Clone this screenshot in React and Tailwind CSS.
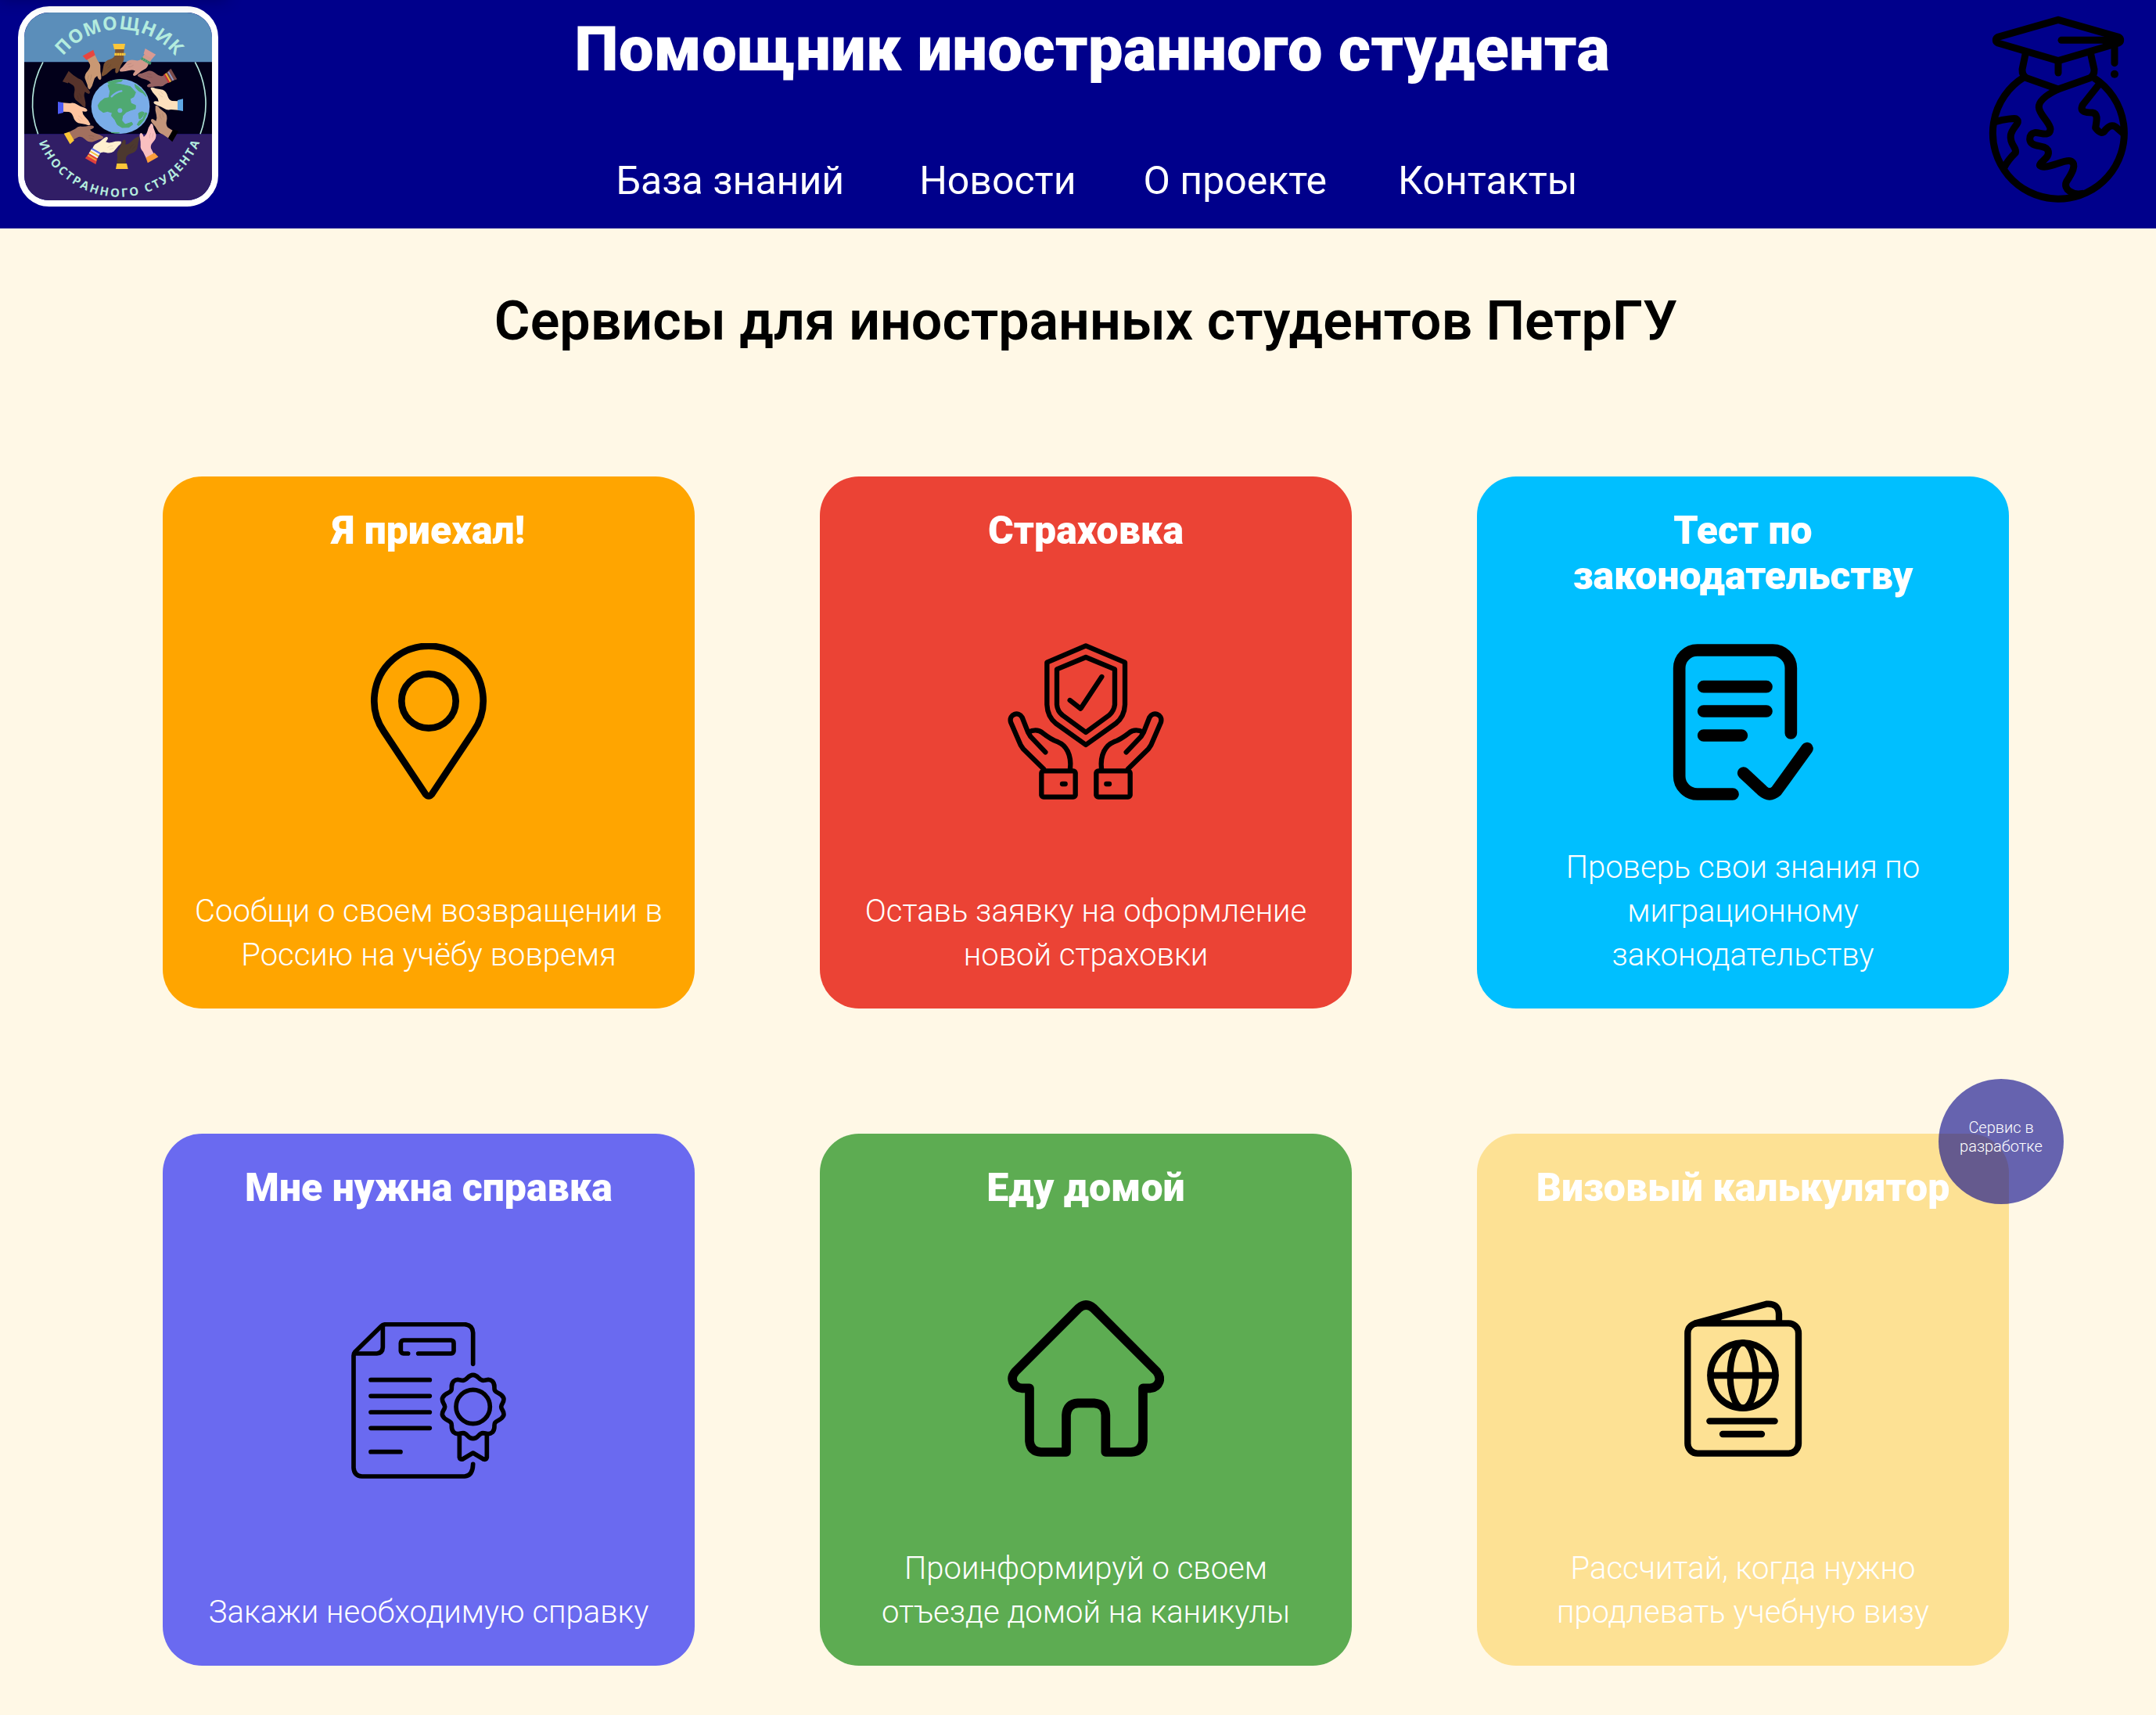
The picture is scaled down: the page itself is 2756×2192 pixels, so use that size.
import React from "react";

const CENTER = { x: 462, y: 408 };

const HANDS = [
  { angle: 0, skin: "#7a5233", cuff: "#fcc638", beads: "#fcc638" },
  { angle: 30, skin: "#d39a8c", cuff: "#d99a93", beads: "#3f9d6e" },
  { angle: 60, skin: "#956161", cuff: "#7c4b4a", bands: ["#8f9bc9", "#7c4b4a", "#f0b429", "#c8323c"] },
  { angle: 90, skin: "#fde0bd", cuff: "#5fa8e6" },
  { angle: 120, skin: "#c3957b", cuff: "#000000" },
  { angle: 150, skin: "#f9bfc0", cuff: "#fd9f3c" },
  { angle: 180, skin: "#4c382f", cuff: "#fcc638" },
  { angle: 210, skin: "#fff0cf", cuff: "#e0403c", bands: ["#f4a63a", "#e0403c", "#f6f0ea", "#f4c23a", "#f6f0ea", "#5b6be8"] },
  { angle: 240, skin: "#a2705f", cuff: "#fcc638" },
  { angle: 270, skin: "#ffc4a0", cuff: "#4d5cf5" },
  { angle: 300, skin: "#57332b", cuff: "#57332b" },
  { angle: 330, skin: "#c99873", cuff: "#e8453f" },
];

function Hand({ angle, skin, cuff, beads, bands = [] }) {
  return (
    <g transform={`rotate(${angle} ${CENTER.x} ${CENTER.y})`}>
      <path
        d="M442 186 L476 186 L474 214 Q478 230 470 240 Q462 252 458 266 Q452 284 444 280 Q440 276 443 262 Q432 262 422 272 Q408 287 393 293 Q386 288 393 274 L398 246 Q404 232 422 227 Q438 222 441 210 Z"
        fill={skin}
      />
      <path d="M412 262 Q422 258 426 246 M404 256 L416 244" stroke="#000" strokeOpacity="0.12" strokeWidth="2" fill="none" />
      <path d="M433 168 L480 168 L476 189 L438 189 Z" fill={cuff} />
      {beads && <path d="M439 208 H481" stroke={beads} strokeWidth="10" strokeDasharray="8 1" fill="none" />}
      {bands.map((c, i) => (
        <rect key={i} x="439" y={180 + i * 6} width="38" height="6" fill={c} />
      ))}
    </g>
  );
}

function Logo() {
  return (
    <svg viewBox="93 48 720 720" className="block size-full overflow-visible">
      <defs>
        <path id="logo-top" d="M 180 390 A 277 277 0 0 1 734 390" />
        <path id="logo-bottom" d="M 125 423 A 332 332 0 0 0 789 423" />
        <clipPath id="logo-clip">
          <rect x="93" y="48" width="720" height="720" rx="96" />
        </clipPath>
      </defs>
      <g clipPath="url(#logo-clip)">
        <rect x="93" y="48" width="720" height="191" fill="#5b8eba" />
        <rect x="93" y="238" width="720" height="276" fill="#02001a" />
        <rect x="93" y="514" width="720" height="254" fill="#311e66" />
      </g>
      <g fill="none" stroke="#b3e6dc" strokeWidth="5">
        <path d="M165 238 A332 332 0 0 0 146 514" />
        <path d="M748 238 A332 332 0 0 1 768 514" />
      </g>
      <ellipse cx="462" cy="408" rx="112" ry="105" fill="#7aade8" />
      <g fill="#4fa972" stroke="#4fa972" strokeWidth="3" strokeLinejoin="round">
        <path d="M414 326 L432 319 L462 323 L500 332 L520 354 L513 371 L499 379 L502 396 L520 404 L519 417 L500 423 L484 430 L470 444 L467 462 L480 477 L505 469 L509 477 L494 488 L468 489 L450 478 L441 460 L428 444 L430 432 L412 427 L396 431 L380 419 L376 404 L384 391 L400 378 L418 374 L422 350 Z" />
        <path d="M412 316 Q436 305 470 305 L466 312 L440 317 L418 321 Z" />
        <path d="M517 323 Q550 344 561 370 L548 357 L532 349 L520 336 Z" />
        <path d="M531 435 Q544 424 553 432 Q546 454 534 456 Z" />
        <path d="M557 432 L564 434 Q554 464 532 482 L526 478 L534 464 L548 456 Z" />
        <path d="M427 508 L458 509 Q440 512 427 508 Z" />
      </g>
      <circle cx="460" cy="424" r="9" fill="#7aade8" />
      <path d="M428 370 Q446 352 466 349" stroke="#7aade8" strokeWidth="7" strokeLinecap="round" fill="none" />
      {HANDS.map((h) => (
        <Hand key={h.angle} {...h} />
      ))}
      <text fill="#b4ecde" fontFamily="'Open Sans', sans-serif" fontWeight="700" fontSize="71" textAnchor="middle">
        <textPath href="#logo-top" startOffset="50%" textLength="492">ПОМОЩНИК</textPath>
      </text>
      <text fill="#b4ecde" fontFamily="'Open Sans', sans-serif" fontWeight="700" fontSize="45" textAnchor="middle">
        <textPath href="#logo-bottom" startOffset="50%" textLength="790">ИНОСТРАННОГО СТУДЕНТА</textPath>
      </text>
    </svg>
  );
}

function GraduateGlobe() {
  return (
    <svg viewBox="36 60 717 720" className="block h-[240px] w-[239px]" fill="none" stroke="#000" strokeWidth="27" strokeLinecap="round" strokeLinejoin="round">
      <path d="M262 296 A252 252 0 1 0 531 299" />
      <path d="M393 76 L162 142 Q154 146 154 154 Q154 162 162 165 L393 233 L624 165 Q632 162 632 154 Q632 146 624 142 Z" />
      <path d="M405 154 H620" />
      <path d="M560 150 L620 140 L624 164 L570 172 Z" fill="#000" strokeWidth="8" />
      <path d="M609 170 V242" />
      <circle cx="609" cy="284" r="15" fill="#000" stroke="none" />
      <path d="M393 240 V279" />
      <path d="M267 208 L255 266 Q254 290 272 299 L393 342 L514 299 Q532 290 531 266 L518 208" />
      <path d="M393 342 Q318 378 319 411 C320 440 362 470 363 495 C361 528 322 506 303 509 Q284 512 284 534 C286 568 340 552 353 575 C366 604 322 620 322 634 C344 654 410 612 438 617 C470 626 442 670 425 696 C410 726 450 750 486 742" />
      <path d="M549 324 L487 402 C474 430 500 432 524 432 C548 436 540 464 536 490 Q560 522 574 498 Q600 468 622 494 L641 510" />
      <path d="M154 466 C190 456 222 454 230 455 C254 470 218 484 211 518 C206 556 236 566 229 586 Q200 614 186 642" />
    </svg>
  );
}

function PinIcon() {
  return (
    <svg viewBox="24 66 600 600" className="block size-[200px]" fill="none" stroke="#000" strokeWidth="26" strokeLinejoin="round">
      <path d="M311 644 L152 405 A209 209 0 1 1 496 405 L337 644 Q324 660 311 644 Z" />
      <circle cx="324" cy="288" r="104" />
    </svg>
  );
}

function InsuranceIcon() {
  const hand = (
    <>
      <rect x="184" y="556" width="130" height="100" rx="8" />
      <path d="M264 606 H275" />
      <path d="M192 548 L114 472 L104 457 L66 369 C58 338 97 326 110 351 L132 407 L142 424 L199 484" />
      <path d="M134 408 C150 398 172 396 188 410 C206 424 222 436 247 445 C278 457 300 494 294 548" />
    </>
  );
  return (
    <svg viewBox="54 66 600 600" className="block size-[200px]" fill="none" stroke="#000" strokeWidth="19" strokeLinecap="round" strokeLinejoin="round">
      <path d="M354 76 L504 140 V302 Q502 348 469 374 L354 456 L239 374 Q207 348 205 302 V140 Z" />
      <path d="M354 120 L465 166 V302 Q462 326 444 342 L354 408 L264 342 Q245 326 243 302 V166 Z" />
      <path d="M293 285 L334 317 L415 195" />
      {hand}
      <g transform="translate(708 0) scale(-1 1)">{hand}</g>
    </svg>
  );
}

function TestIcon() {
  return (
    <svg viewBox="54 69 600 600" className="block size-[200px]" fill="none" stroke="#000" strokeWidth="47" strokeLinecap="round" strokeLinejoin="round">
      <path d="M538 411 V162 A69 69 0 0 0 469 93 H179 A69 69 0 0 0 110 162 V576 A69 69 0 0 0 179 645 H315" />
      <path d="M203 233 H444 M203 327 H444 M203 420 H349" />
      <path d="M356 564 L430 633 Q456 656 482 633 L600 470" />
    </svg>
  );
}

function CertificateIcon() {
  return (
    <svg viewBox="54 60 600 600" className="block size-[200px]" fill="none" stroke="#000" strokeWidth="17" strokeLinecap="round" strokeLinejoin="round">
      <path d="M524 220 V100 Q522 70 492 68 H188 Q178 69 172 75 L72 173 Q66 180 66 188 V618 Q68 649 98 651 H492 Q523 648 524 604" />
      <path d="M178 74 V156 Q177 178 155 180 H72" />
      <path d="M275 180 H258 Q248 179 247 170 V140 Q248 130 258 129 H440 Q450 130 450 140 V170 Q449 179 440 180 H314" />
      <path d="M132 281 H358 M132 343 H358 M132 405 H358 M132 466 H358 M132 557 H246" />
      <circle cx="524" cy="384" r="65" />
      <path d="M524 262 C545 262 544 282 562 283 C578 283 584 274 598 286 C612 300 602 312 608 322 C616 334 634 332 641 350 C646 366 632 372 632 384 C632 396 646 402 641 418 C634 436 616 434 608 446 C602 456 612 468 598 482 C584 494 578 485 562 485 C544 486 545 506 524 506 C503 506 504 486 486 485 C470 485 464 494 450 482 C436 468 446 456 440 446 C432 434 414 436 407 418 C402 402 416 396 416 384 C416 372 402 366 407 350 C414 332 432 334 440 322 C446 312 436 300 450 286 C464 274 470 283 486 283 C504 282 503 262 524 262 Z" />
      <path d="M472 490 V578 Q474 588 484 585 L524 561 L564 585 Q574 588 577 578 V490" />
    </svg>
  );
}

function HouseIcon() {
  return (
    <svg viewBox="54 65 600 600" className="block size-[200px]" fill="none" stroke="#000" strokeWidth="35" strokeLinecap="round" strokeLinejoin="round">
      <path d="M279 647 H182 Q142 645 138 605 V402 H108 C76 398 60 366 84 338 L328 94 Q355 72 382 94 L626 338 C648 366 634 398 602 402 H573 V605 Q569 645 528 647 H430 V505 Q428 462 386 459 H324 Q282 462 279 505 Z" />
    </svg>
  );
}

function PassportIcon() {
  return (
    <svg viewBox="-6 66 600 600" className="block size-[200px]" fill="none" stroke="#000" strokeWidth="25" strokeLinecap="round" strokeLinejoin="round">
      <rect x="82" y="154" width="425" height="499" rx="38" />
      <path d="M112 154 L384 80 Q430 76 432 118 V150" />
      <path d="M112 154 L210 130 L205 152 Z" fill="#000" strokeWidth="6" />
      <circle cx="294" cy="354" r="125" />
      <ellipse cx="294" cy="354" rx="49" ry="125" />
      <path d="M170 354 H418" />
      <path d="M166 529 H416 M216 579 H366" />
    </svg>
  );
}

const NAV = [
  { label: "База знаний", className: "" },
  { label: "Новости", className: "ml-[96px]" },
  { label: "О проекте", className: "ml-[86px]" },
  { label: "Контакты", className: "ml-[91px]" },
];

const CARDS = [
  { title: "Я приехал!", text: "Сообщи о своем возвращении в Россию на учёбу вовремя", Icon: PinIcon, color: "bg-[#ffa500]" },
  { title: "Страховка", text: "Оставь заявку на оформление новой страховки", Icon: InsuranceIcon, color: "bg-[#eb4335]" },
  { title: "Тест по законодательству", text: "Проверь свои знания по миграционному законодательству", Icon: TestIcon, color: "bg-[#00bfff]" },
  { title: "Мне нужна справка", text: "Закажи необходимую справку", Icon: CertificateIcon, color: "bg-[#6a6af0]" },
  { title: "Еду домой", text: "Проинформируй о своем отъезде домой на каникулы", Icon: HouseIcon, color: "bg-[#5dac52]" },
  { title: "Визовый калькулятор", text: "Рассчитай, когда нужно продлевать учебную визу", Icon: PassportIcon, color: "bg-[#fde194]", badge: "Сервис в разработке" },
];

function Card({ title, text, Icon, color, badge }) {
  return (
    <article className={`relative flex size-[680px] flex-col items-center justify-between rounded-[50px] p-10 text-center text-white ${color}`}>
      <h2 className="text-[50px] leading-[58px] font-black">{title}</h2>
      <Icon />
      <p className="text-[40px] leading-[56px] font-light">{text}</p>
      {badge && (
        <div className="absolute -top-[70px] -right-[70px] flex size-[160px] items-center justify-center rounded-full bg-[#00008b]/60 px-5 pb-3 text-[20px] leading-[24px] font-light">
          {badge}
        </div>
      )}
    </article>
  );
}

export default function App() {
  return (
    <div className="relative h-[2192px] w-[2756px] overflow-hidden bg-[#fff8e6] font-['Roboto',sans-serif] text-black">
      <header className="flex h-[292px] items-start justify-between bg-[#00008b] pr-[5px] pl-[23px] text-white">
        <div className="mt-2 size-[256px] shrink-0 rounded-[40px] border-8 border-white">
          <Logo />
        </div>
        <div className="flex flex-1 flex-col items-center pt-4 pl-px">
          <h1 className="text-[80px] leading-[94px] font-black">Помощник иностранного студента</h1>
          <nav className="mt-[92px] flex pl-[12px] text-[50px] leading-[58px] font-normal">
            {NAV.map((n) => (
              <a key={n.label} href="#" className={n.className}>{n.label}</a>
            ))}
          </nav>
        </div>
        <div className="mt-5 shrink-0">
          <GraduateGlobe />
        </div>
      </header>
      <div className="pointer-events-none absolute -top-5 left-0 h-5 w-[290px] shadow-[0_0_20px_rgba(0,0,0,0.25)]" />
      <main className="pr-[188px] pl-[208px]">
        <h2 className="pt-[77px] text-center text-[70px] leading-[82px] font-semibold">Сервисы для иностранных студентов ПетрГУ</h2>
        <div className="mt-[158px] grid grid-cols-[repeat(3,680px)] gap-[160px]">
          {CARDS.map((c) => (
            <Card key={c.title} {...c} />
          ))}
        </div>
      </main>
    </div>
  );
}
